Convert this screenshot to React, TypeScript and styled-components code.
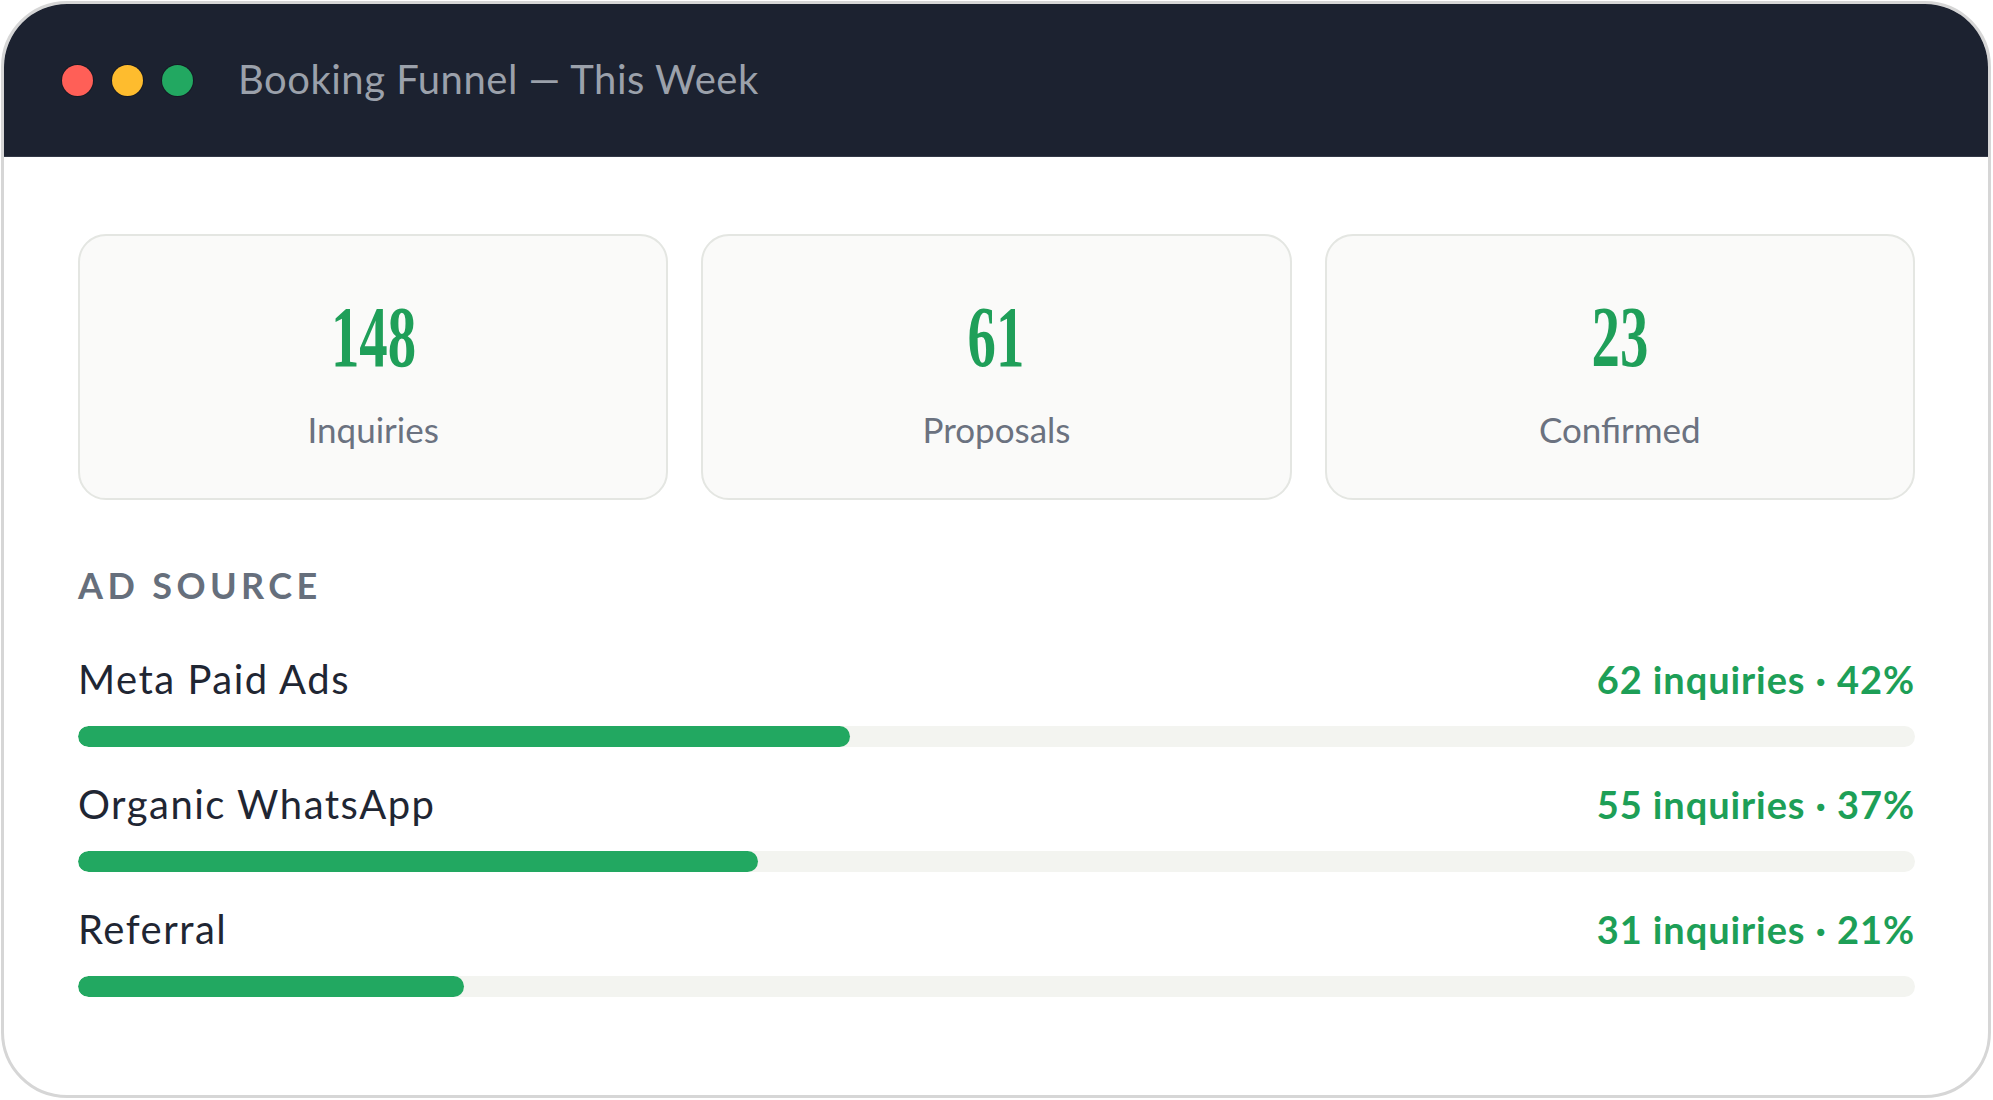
import React from "react";
import styled, { createGlobalStyle } from "styled-components";

const GlobalStyle = createGlobalStyle`
  html, body {
    margin: 0;
    padding: 0;
    background: #ffffff;
  }
  body {
    font-family: Lato, "Noto Sans", sans-serif;
  }
  * {
    box-sizing: border-box;
  }
`;

type Stat = { value: string; label: string };
type Source = { name: string; count: number; pct: number };

const stats: Stat[] = [
  { value: "148", label: "Inquiries" },
  { value: "61", label: "Proposals" },
  { value: "23", label: "Confirmed" },
];

const sources: Source[] = [
  { name: "Meta Paid Ads", count: 62, pct: 42 },
  { name: "Organic WhatsApp", count: 55, pct: 37 },
  { name: "Referral", count: 31, pct: 21 },
];

const Window = styled.div`
  margin: 1px 0 0 1px;
  width: 1990px;
  height: 1097px;
  border: 3px solid #d6d6d6;
  border-radius: 66px;
  overflow: hidden;
  display: flex;
  flex-direction: column;
  background: #ffffff;
`;

const TitleBar = styled.div`
  height: 153px;
  flex-shrink: 0;
  background: #1c2230;
  border-bottom: 1px solid #323846;
  display: flex;
  align-items: center;
  padding-left: 58px;
`;

const Dots = styled.div`
  display: flex;
  gap: 19px;
  margin-right: 45px;
`;

const Dot = styled.span<{ $color: string }>`
  width: 31px;
  height: 31px;
  border-radius: 50%;
  background: ${(p) => p.$color};
  box-shadow: 0 0 0 1px rgba(0, 0, 0, 0.25);
`;

const Title = styled.div`
  color: #9ba1ab;
  font-size: 40px;
  letter-spacing: 0.5px;
  line-height: 1;
  margin-top: -3px;
`;

const Body = styled.div`
  flex: 1;
  padding: 77px 73px 0 74px;
`;

const Cards = styled.div`
  display: grid;
  grid-template-columns: repeat(3, 1fr);
  gap: 33px;
`;

const Card = styled.div`
  height: 266px;
  background: #fafaf9;
  border: 2px solid #e4e6e2;
  border-radius: 28px;
  display: flex;
  flex-direction: column;
  align-items: center;
  padding-top: 58px;
`;

const Number = styled.div`
  color: #1f9f59;
  font-family: "Liberation Serif", "DejaVu Serif", serif;
  font-size: 86px;
  font-weight: 700;
  line-height: 86px;
  transform: scaleX(0.66);
  height: 86px;
`;

const CardLabel = styled.div`
  margin-top: 28px;
  color: #6b7280;
  font-size: 35px;
  line-height: 42px;
`;

const Heading = styled.div`
  margin-top: 63px;
  color: #666f7c;
  font-size: 36px;
  font-weight: 700;
  letter-spacing: 4.4px;
  line-height: 44px;
`;

const Rows = styled.div`
  margin-top: 48px;
  display: flex;
  flex-direction: column;
  gap: 33px;
`;

const Row = styled.div`
  display: flex;
  flex-direction: column;
`;

const RowHead = styled.div`
  display: flex;
  justify-content: space-between;
  align-items: baseline;
  height: 48px;
  margin-bottom: 23px;
`;

const SourceName = styled.span`
  color: #1f2633;
  font-size: 40px;
  line-height: 48px;
  letter-spacing: 1.5px;
`;

const SourceStat = styled.span`
  color: #1d9f57;
  font-size: 38px;
  font-weight: 700;
  line-height: 48px;
  letter-spacing: 0.9px;
`;

const Track = styled.div`
  height: 21px;
  border-radius: 11px;
  background: #f3f4f0;
  overflow: hidden;
`;

const Fill = styled.div`
  height: 100%;
  border-radius: 11px;
  background: #22a861;
`;

export default function App() {
  return (
    <>
      <GlobalStyle />
      <Window>
        <TitleBar>
          <Dots>
            <Dot $color="#ff5f57" />
            <Dot $color="#febc2e" />
            <Dot $color="#22a861" />
          </Dots>
          <Title>Booking Funnel — This Week</Title>
        </TitleBar>
        <Body>
          <Cards>
            {stats.map((s) => (
              <Card key={s.label}>
                <Number>{s.value}</Number>
                <CardLabel>{s.label}</CardLabel>
              </Card>
            ))}
          </Cards>
          <Heading>AD SOURCE</Heading>
          <Rows>
            {sources.map((s) => (
              <Row key={s.name}>
                <RowHead>
                  <SourceName>{s.name}</SourceName>
                  <SourceStat>
                    {s.count} inquiries · {s.pct}%
                  </SourceStat>
                </RowHead>
                <Track>
                  <Fill style={{ width: `${s.pct}%` }} />
                </Track>
              </Row>
            ))}
          </Rows>
        </Body>
      </Window>
    </>
  );
}
